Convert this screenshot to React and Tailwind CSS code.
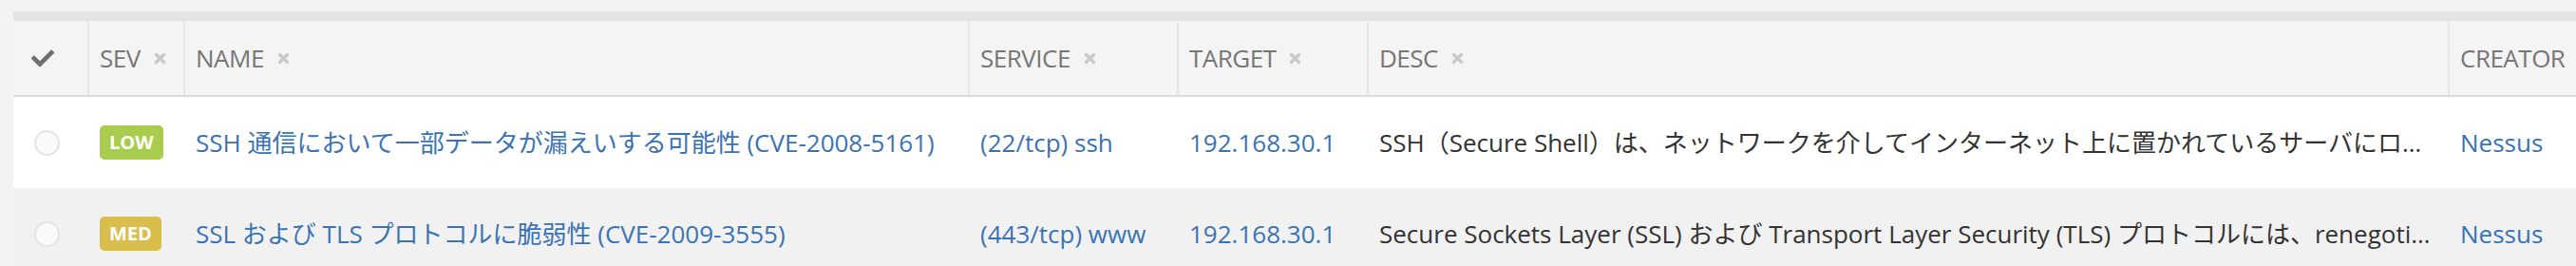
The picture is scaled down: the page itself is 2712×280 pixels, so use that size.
import React from "react";

const FONT = "font-['Open_Sans','Noto_Sans_CJK_JP',sans-serif]";

function XIcon() {
  return (
    <svg width="13" height="13" viewBox="0 0 13 13" className="shrink-0">
      <path d="M2.5 2.5 L10.5 10.5 M10.5 2.5 L2.5 10.5" stroke="#c9c9c9" strokeWidth="3.4" strokeLinecap="round" />
    </svg>
  );
}

function CheckIcon() {
  return (
    <svg width="24" height="19" viewBox="0 65 512 382">
      <path
        fill="#6f6f6f"
        d="M173.898 439.404l-166.4-166.4c-9.997-9.997-9.997-26.206 0-36.204l36.203-36.204c9.997-9.998 26.207-9.998 36.204 0L192 312.69 432.095 72.596c9.997-9.997 26.207-9.997 36.204 0l36.203 36.204c9.997 9.997 9.997 26.206 0 36.204l-294.4 294.401c-9.998 9.997-26.207 9.997-36.204-.001z"
      />
    </svg>
  );
}

function HeadCell({ label, className }) {
  return (
    <div className={`flex h-full items-center gap-[14px] border-l-2 border-[#e6e6e6] pl-[11px] ${className}`}>
      <span className="whitespace-nowrap text-[26px] text-[#767676] tracking-[-0.5px]">{label}</span>
      <XIcon />
    </div>
  );
}

const rows = [
  {
    sev: "LOW",
    sevBg: "bg-[#a9cc4f]",
    name: "SSH 通信において一部データが漏えいする可能性 (CVE-2008-5161)",
    service: "(22/tcp) ssh",
    target: "192.168.30.1",
    desc: "SSH（Secure Shell）は、ネットワークを介してインターネット上に置かれているサーバにログインし、遠隔操作を行うためのプロトコルです。",
    creator: "Nessus",
    bg: "bg-white",
  },
  {
    sev: "MED",
    sevBg: "bg-[#d9be4c]",
    name: "SSL および TLS プロトコルに脆弱性 (CVE-2009-3555)",
    service: "(443/tcp) www",
    target: "192.168.30.1",
    desc: "Secure Sockets Layer (SSL) および Transport Layer Security (TLS) プロトコルには、renegotiation に関する脆弱性が存在します。",
    creator: "Nessus",
    bg: "bg-[#f1f1f1]",
  },
];

export default function App() {
  return (
    <div className={`h-[280px] w-[2712px] overflow-hidden bg-[#f3f3f3] pl-[14px] pt-[12px] ${FONT}`}>
      <div className="w-[2900px]">
        <div className="h-[10px] bg-[#e4e4e4]" />
        <div className="flex h-[80px] border-b-2 border-[#dcdcdc] bg-[#f4f4f4]">
          <div className="flex h-full w-[78px] items-center pl-[19px] pt-[1px]">
            <CheckIcon />
          </div>
          <HeadCell label="SEV" className="w-[101px]" />
          <HeadCell label="NAME" className="w-[826px]" />
          <HeadCell label="SERVICE" className="w-[220px]" />
          <HeadCell label="TARGET" className="w-[200px]" />
          <HeadCell label="DESC" className="w-[1138px]" />
          <HeadCell label="CREATOR" className="w-[250px]" />
        </div>
        {rows.map((r, i) => (
          <div key={i} className={`flex h-[96px] items-center ${r.bg}`}>
            <div className="flex w-[78px] items-center pl-[22px]">
              <div className="h-[27px] w-[27px] rounded-full border-2 border-[#e4e4e4] bg-[#fafafa]" />
            </div>
            <div className="w-[101px] pl-[13px]">
              <span className={`inline-flex h-[36px] items-center rounded-[5px] px-[10px] text-[20px] font-bold text-white ${r.sevBg}`}>
                {r.sev}
              </span>
            </div>
            <div className="w-[826px] truncate pl-[13px] text-[26px] text-[#3a73b4]">{r.name}</div>
            <div className="w-[220px] truncate pl-[13px] text-[26px] text-[#3a73b4]">{r.service}</div>
            <div className="w-[200px] truncate pl-[13px] text-[26px] text-[#3a73b4]">{r.target}</div>
            <div className="w-[1138px] truncate pl-[13px] pr-[12px] text-[26px] text-[#333333]">{r.desc}</div>
            <div className="w-[250px] truncate pl-[13px] text-[26px] text-[#3a73b4]">{r.creator}</div>
          </div>
        ))}
      </div>
    </div>
  );
}
